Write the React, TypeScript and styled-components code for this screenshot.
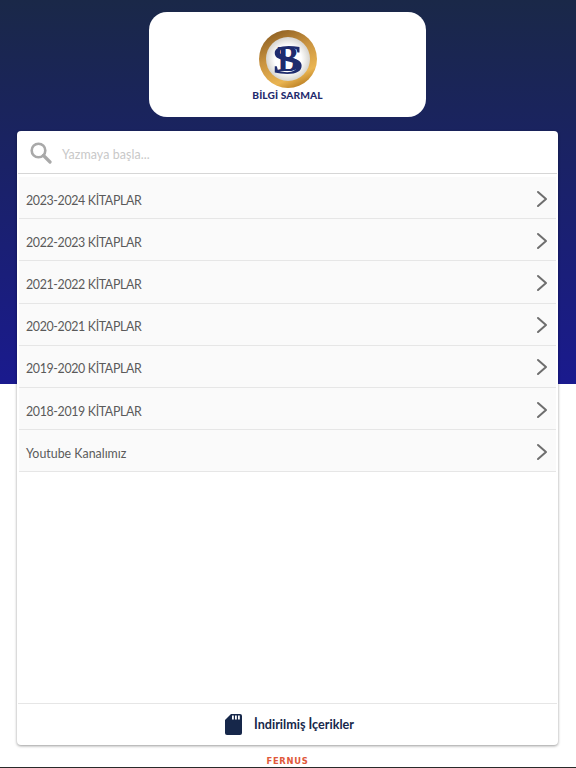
import { createGlobalStyle, styled } from 'styled-components';

const items = [
  { label: '2023-2024 KİTAPLAR', spacing: -0.35 },
  { label: '2022-2023 KİTAPLAR', spacing: -0.35 },
  { label: '2021-2022 KİTAPLAR', spacing: -0.35 },
  { label: '2020-2021 KİTAPLAR', spacing: -0.35 },
  { label: '2019-2020 KİTAPLAR', spacing: -0.35 },
  { label: '2018-2019 KİTAPLAR', spacing: -0.35 },
  { label: 'Youtube Kanalımız', spacing: 0 },
];

export default function App() {
  return (
    <Page>
      <GlobalStyle />
      <LogoCard>
        <LogoMark />
        <Brand>BİLGİ SARMAL</Brand>
      </LogoCard>

      <Panel>
        <SearchBar>
          <SearchIcon />
          <Placeholder>Yazmaya başla...</Placeholder>
        </SearchBar>
        <List>
          {items.map((item) => (
            <Row key={item.label}>
              <RowLabel $spacing={item.spacing}>{item.label}</RowLabel>
              <Chevron />
            </Row>
          ))}
        </List>
        <Downloads>
          <SdIcon />
          <DownloadsLabel>İndirilmiş İçerikler</DownloadsLabel>
        </Downloads>
      </Panel>

      <Footer>FERNUS</Footer>
    </Page>
  );
}

function LogoMark() {
  return (
    <svg width="58" height="58" viewBox="0 0 58 58">
      <defs>
        <linearGradient id="ring" x1="0.25" y1="0" x2="0.7" y2="1">
          <stop offset="0" stopColor="#8d5f22" />
          <stop offset="0.4" stopColor="#c8923f" />
          <stop offset="0.8" stopColor="#eab552" />
          <stop offset="1" stopColor="#b87c20" />
        </linearGradient>
        <radialGradient id="plate">
          <stop offset="0.6" stopColor="#ffffff" />
          <stop offset="1" stopColor="#d6d4cf" />
        </radialGradient>
      </defs>
      <circle cx="29" cy="29" r="29" fill="url(#ring)" />
      <circle cx="29" cy="29" r="22" fill="url(#plate)" />
      <g fill="#1f2c6e" fontFamily="'Liberation Serif', serif" textAnchor="middle">
        <text transform="translate(29 41) scale(0.9 1)" fontSize="36" fontWeight="700">
          B
        </text>
        <text transform="translate(29 44) scale(1.5 1)" fontSize="42" fontWeight="400">
          S
        </text>
      </g>
    </svg>
  );
}

function SearchIcon() {
  return (
    <svg width="22" height="22" viewBox="0 0 22 22" fill="none" stroke="#a9a9a9">
      <circle cx="8.5" cy="8.5" r="6.8" strokeWidth="2.6" />
      <path d="M13.5 13.5l6.5 6.5" strokeWidth="3.2" strokeLinecap="round" />
    </svg>
  );
}

function Chevron() {
  return (
    <svg width="12" height="18" viewBox="0 0 12 18" fill="none" stroke="#6e6e6e">
      <path d="M2 2l8 7-8 7" strokeWidth="2" strokeLinecap="round" strokeLinejoin="round" />
    </svg>
  );
}

function SdIcon() {
  return (
    <svg width="17" height="21" viewBox="0 0 17 21">
      <path
        d="M6 0h9a2 2 0 0 1 2 2v17a2 2 0 0 1-2 2H2a2 2 0 0 1-2-2V6z"
        fill="#16274a"
      />
      <path d="M7 1.5h1.8v4H7zM10 1.5h1.8v4H10zM13 1.5h1.8v4H13z" fill="#fff" />
    </svg>
  );
}

const GlobalStyle = createGlobalStyle`
  html, body {
    margin: 0;
    padding: 0;
    background: #fff;
  }
`;

const Page = styled.div`
  width: 576px;
  height: 768px;
  box-sizing: border-box;
  padding: 12px 1px 0 0;
  border-bottom: 1px solid #2a2a2a;
  display: flex;
  flex-direction: column;
  align-items: center;
  overflow: hidden;
  font-family: 'Lato', 'Noto Sans', sans-serif;
  background: linear-gradient(180deg, #1a2848 0%, #1a1a8e 384px, #fff 384px);
`;

const LogoCard = styled.div`
  width: 277px;
  height: 105px;
  box-sizing: border-box;
  padding-top: 18px;
  background: #fff;
  border-radius: 18px;
  display: flex;
  flex-direction: column;
  align-items: center;
`;

const Brand = styled.div`
  margin-top: 1px;
  font-size: 10.2px;
  line-height: 12px;
  font-weight: 900;
  color: #1f2c6e;
  letter-spacing: 0.1px;
`;

const Panel = styled.div`
  width: 541px;
  height: 614px;
  margin-top: 14px;
  background: #fff;
  border-radius: 4px;
  box-shadow: 0 1px 3px rgba(0, 0, 0, 0.4);
  display: flex;
  flex-direction: column;
`;

const SearchBar = styled.div`
  height: 40px;
  margin: 0 1px;
  padding: 2px 0 0 12px;
  border-bottom: 1px solid #d6d6d6;
  display: flex;
  align-items: center;
  gap: 10px;
`;

const Placeholder = styled.span`
  padding-top: 2px;
  font-size: 12.4px;
  color: #c8c8c8;
  letter-spacing: 0.1px;
`;

const List = styled.div`
  flex: 1;
  padding-top: 3px;
`;

const Row = styled.div`
  height: 42.2px;
  box-sizing: border-box;
  margin: 0 2px;
  padding: 2px 8px 0 7px;
  background: #fafafa;
  border-bottom: 1px solid #e6e6e6;
  display: flex;
  align-items: center;
  justify-content: space-between;
`;

const RowLabel = styled.span<{ $spacing: number }>`
  padding-top: 3px;
  font-size: 12.4px;
  color: #5a5a5a;
  letter-spacing: ${(props) => props.$spacing}px;
`;

const Downloads = styled.div`
  height: 42px;
  margin: 0 1px;
  padding: 0 0 1px 4px;
  box-sizing: border-box;
  border-top: 1px solid #e6e6e6;
  display: flex;
  align-items: center;
  justify-content: center;
  gap: 12px;
`;

const DownloadsLabel = styled.span`
  font-size: 12.6px;
  font-weight: 700;
  color: #16274a;
`;

const Footer = styled.div`
  margin-top: 11px;
  font-family: 'DejaVu Sans', sans-serif;
  font-size: 8.4px;
  line-height: 10px;
  font-weight: 700;
  letter-spacing: 0.7px;
  color: #e0593a;
`;
